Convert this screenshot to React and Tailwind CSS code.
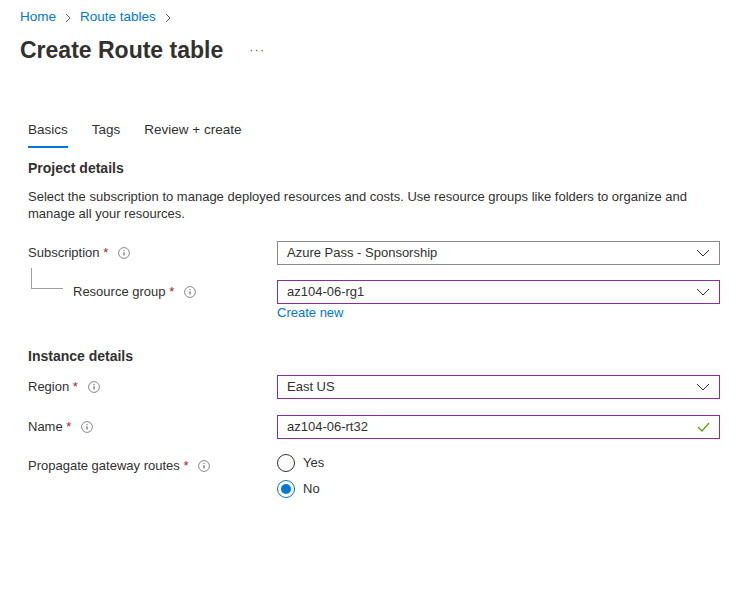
import React from 'react'

const FONT = { fontFamily: '"Segoe UI", "Liberation Sans", Arial, sans-serif' }

function Info() {
  return (
    <svg width="12" height="12" viewBox="0 0 12 12" className="shrink-0">
      <circle cx="6" cy="6" r="5.4" fill="none" stroke="#8a8886" strokeWidth="1" />
      <path d="M6 5.2v3.3" stroke="#605e5c" strokeWidth="1.1" />
      <circle cx="6" cy="3.6" r="0.65" fill="#605e5c" />
    </svg>
  )
}

function Chevron() {
  return (
    <svg width="14" height="8" viewBox="0 0 14 8">
      <path d="M1 1l6 6 6-6" fill="none" stroke="#323130" strokeWidth="1" />
    </svg>
  )
}

function Crumb() {
  return (
    <svg width="6" height="10" viewBox="0 0 6 10" className="mx-[9px] mt-[1px]">
      <path d="M1 1l4 4-4 4" fill="none" stroke="#605e5c" strokeWidth="1" />
    </svg>
  )
}

function Check() {
  return (
    <svg width="13" height="10" viewBox="0 0 13 10">
      <path d="M1 5l4 4 7-8" fill="none" stroke="#57a300" strokeWidth="1.2" />
    </svg>
  )
}

function Label({ text, indent }) {
  return (
    <div className={`flex items-center gap-[10px] w-[249px] shrink-0 text-[13px] text-[#323130] ${indent ? 'pl-[45px]' : ''}`}>
      <span>
        {text} <span className="text-[#a4262c]">*</span>
      </span>
      <Info />
    </div>
  )
}

function Field({ value, purple, icon }) {
  return (
    <div
      className={`w-[443px] h-[24px] flex items-center justify-between pl-[9px] pr-[9px] text-[13px] text-[#323130] border ${
        purple ? 'border-[#8a2da5]' : 'border-[#8a8886]'
      }`}
    >
      <span>{value}</span>
      {icon}
    </div>
  )
}

export default function App() {
  return (
    <div className="w-[750px] h-[607px] bg-white" style={FONT}>
      <div className="px-[20px] pt-[7px]">
        {/* breadcrumb */}
        <div className="flex items-center h-[20px] text-[13.5px] text-[#0078d4]">
          <span>Home</span>
          <Crumb />
          <span>Route tables</span>
          <Crumb />
        </div>
        <div className="flex items-center mt-[7px] h-[32px]">
          <h1 className="text-[23px] font-semibold text-[#323130] leading-[32px]">Create Route table</h1>
          <span className="ml-[26px] text-[#605e5c] text-[13px] tracking-[1px]">···</span>
        </div>
      </div>

      <div className="pl-[28px] mt-[50px]">
        {/* tabs */}
        <div className="flex items-end gap-[24px] text-[13.5px] text-[#323130] h-[32px]">
          <div className="flex flex-col">
            <span className="leading-[20px]">Basics</span>
            <span className="h-[2px] bg-[#0078d4] mt-[6px]" />
          </div>
          <div className="flex flex-col">
            <span className="leading-[20px]">Tags</span>
            <span className="h-[2px] mt-[6px]" />
          </div>
          <div className="flex flex-col">
            <span className="leading-[20px]">Review + create</span>
            <span className="h-[2px] mt-[6px]" />
          </div>
        </div>

        <div className="mt-[10px] text-[14px] font-semibold text-[#323130] leading-[20px]">Project details</div>
        <p className="mt-[10px] text-[13px] leading-[17px] text-[#323130] w-[680px]">
          Select the subscription to manage deployed resources and costs. Use resource groups like folders to organize and
          manage all your resources.
        </p>

        <div className="mt-[19px] flex items-center">
          <Label text="Subscription" />
          <Field value="Azure Pass - Sponsorship" icon={<Chevron />} />
        </div>
        <div className="relative mt-[15px] flex items-start">
          <span className="absolute left-[3px] top-[-12px] w-[32px] h-[21px] border-l border-b border-[#a19f9d]" />
          <div className="h-[24px] flex items-center">
            <Label text="Resource group" indent />
          </div>
          <div className="flex flex-col">
            <Field value="az104-06-rg1" purple icon={<Chevron />} />
            <span className="text-[13px] text-[#0078d4] leading-[18px]">Create new</span>
          </div>
        </div>

        <div className="mt-[24px] text-[14px] font-semibold text-[#323130] leading-[20px]">Instance details</div>

        <div className="mt-[9px] flex items-center">
          <Label text="Region" />
          <Field value="East US" purple icon={<Chevron />} />
        </div>
        <div className="mt-[16px] flex items-center">
          <Label text="Name" />
          <Field value="az104-06-rt32" purple icon={<Check />} />
        </div>
        <div className="mt-[15px] flex items-start">
          <div className="h-[24px] flex items-center">
            <Label text="Propagate gateway routes" />
          </div>
          <div className="flex flex-col gap-[8px] text-[13px] text-[#323130]">
            <label className="flex items-center gap-[8px] h-[18px]">
              <span className="w-[18px] h-[18px] rounded-full border border-[#323130]" />
              <span>Yes</span>
            </label>
            <label className="flex items-center gap-[8px] h-[18px]">
              <span className="w-[18px] h-[18px] rounded-full border border-[#0078d4] flex items-center justify-center">
                <span className="w-[10px] h-[10px] rounded-full bg-[#0078d4]" />
              </span>
              <span>No</span>
            </label>
          </div>
        </div>
      </div>
    </div>
  )
}
